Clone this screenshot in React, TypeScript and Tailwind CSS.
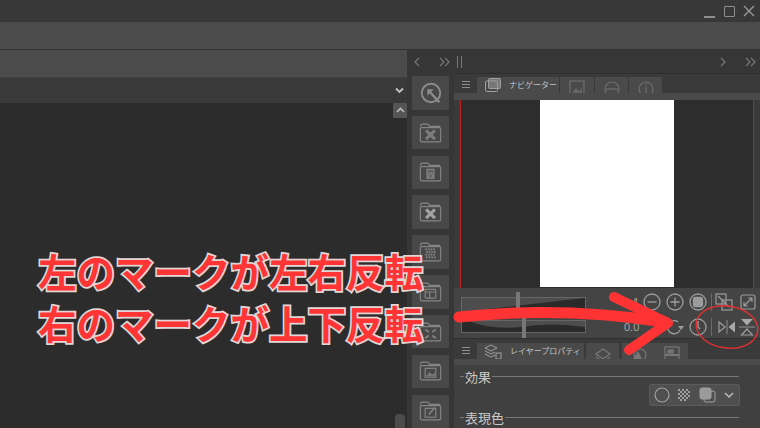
import type { ReactNode } from 'react'

const JP = 'font-["Noto_Sans_CJK_JP","Noto_Sans",sans-serif]'

function Folder({ children }: { children?: ReactNode }) {
  return (
    <div className="flex h-[35px] w-[37px] items-center justify-center bg-[#484848]">
      <svg width="23" height="22" viewBox="0 0 26 24" fill="none" stroke="#858585" strokeWidth="1.3">
        <path d="M2 5V3.5Q2 2 3.5 2H10L12 4.5H24" />
        <rect x="1.5" y="6" width="23" height="16" rx="1.5" />
        {children}
      </svg>
    </div>
  )
}

const toolIcons: ReactNode[] = [
  <path key="a" d="M8 9L18 19M18 9L8 19" strokeWidth="3.5" stroke="#7c7c7c" />,
  <g key="b">
    <rect x="9" y="9" width="8" height="10" fill="#5f5f5f" />
    <path d="M11 19V14Q13 12 15 14V19" />
  </g>,
  <path key="c" d="M8 9L18 19M18 9L8 19" strokeWidth="3.5" stroke="#a2a2a2" />,
  <g key="d" stroke="none" fill="#858585">
    {[7, 10, 13, 16].flatMap((x) =>
      [8, 11, 14, 17].map((y) => <rect key={`${x}-${y}`} x={x + (y % 2)} y={y} width="2" height="2" />),
    )}
  </g>,
  <g key="e">
    <rect x="7" y="9" width="12" height="10" rx="1" />
    <path d="M7 12H19M12 12V19" />
  </g>,
  <path key="f" d="M7 9L11 12M19 9L15 12M7 19L11 16M19 19L15 16" strokeWidth="2" />,
  <g key="g">
    <rect x="7" y="9" width="12" height="10" />
    <path d="M8 18L12 13L15 16L18 14V18Z" fill="#777" stroke="none" />
  </g>,
  <g key="h">
    <rect x="7" y="9" width="12" height="10" />
    <path d="M11 16L18 8" strokeWidth="1.6" />
  </g>,
]

function ToolStrip() {
  return (
    <div className="flex w-[47px] shrink-0 flex-col items-start gap-[6.3px] pl-[5px] pt-[3px]">
      <div className="flex h-[35px] w-[37px] items-center justify-center bg-[#484848]">
        <svg width="24" height="24" viewBox="0 0 26 26" fill="none" stroke="#8c8c8c" strokeWidth="2">
          <circle cx="13" cy="13" r="10" />
          <path d="M10 10L22 23" strokeWidth="2.5" />
          <path d="M9 16V9H16Z" fill="#8c8c8c" stroke="none" />
        </svg>
      </div>
      {toolIcons.map((icon, i) => (
        <Folder key={i}>{icon}</Folder>
      ))}
    </div>
  )
}

function Hamburger() {
  return (
    <div className="flex h-full w-[23px] flex-col items-center gap-[2px] pt-[4px]">
      <span className="h-px w-[8px] bg-[#8e8e8e]" />
      <span className="h-px w-[8px] bg-[#8e8e8e]" />
      <span className="h-px w-[8px] bg-[#8e8e8e]" />
    </div>
  )
}

function Tab({ icon, label, width }: { icon: ReactNode; label?: string; width: string }) {
  return (
    <div className={`flex h-full items-center overflow-hidden bg-[#4a4a4a] ${width} ${label ? 'gap-[8px] pl-[8px]' : 'justify-center pt-[4px]'}`}>
      {icon}
      {label && <span className={`${JP} whitespace-nowrap text-[8px] text-[#c4c4c4]`}>{label}</span>}
    </div>
  )
}

function Round({ children }: { children: ReactNode }) {
  return (
    <svg width="18" height="18" viewBox="0 0 18 18" fill="none" stroke="#9c9c9c" strokeWidth="1.3">
      <circle cx="9" cy="9" r="8" />
      {children}
    </svg>
  )
}

function SliderTrack({ down }: { down?: boolean }) {
  return down ? (
    <svg width="125" height="13" viewBox="0 0 125 13" className="block">
      <rect x="0.5" y="0.5" width="124" height="12" fill="#4d4d4d" stroke="#666" />
      <path d="M1 1H8Q30 10 60 7Q90 2 124 7V12H1Z" fill="#2a2a2a" />
    </svg>
  ) : (
    <svg width="125" height="20" viewBox="0 0 125 20" className="block">
      <rect x="0.5" y="0.5" width="124" height="19" fill="#4d4d4d" stroke="#666" />
      <path d="M1 15L124 1V19H1Z" fill="#2a2a2a" />
    </svg>
  )
}

function NavigatorControls() {
  return (
    <div className="flex h-[50px] items-start gap-[32px] bg-[#444] pl-[7px] pt-[5px]">
      <div className="relative mt-[4px] flex flex-col gap-[3px]">
        <SliderTrack />
        <SliderTrack down />
        <span className="absolute left-[55px] top-[-5px] h-[20px] w-[4px] bg-[#787878]" />
        <span className="absolute left-[61px] top-[21px] h-[20px] w-[4px] bg-[#787878]" />
      </div>
      <div className="flex flex-col gap-[7px]">
        <div className="flex items-center gap-[5px]">
          <span className="w-[20px] text-right text-[11px] text-[#aaa] [font-family:'Liberation_Sans',sans-serif]">1.4</span>
          <Round><path d="M4.5 9H13.5" /></Round>
          <Round><path d="M4.5 9H13.5M9 4.5V13.5" /></Round>
          <Round><rect x="4.5" y="4.5" width="9" height="9" rx="2" fill="#9c9c9c" /></Round>
          <span className="-ml-[1px] h-[18px] w-px bg-[#6a6a6a]" />
          <svg width="18" height="18" viewBox="0 0 18 18" fill="none" stroke="#9c9c9c" strokeWidth="1.2" className="-ml-[2px]">
            <rect x="1" y="1" width="10" height="10" />
            <rect x="7" y="7" width="10" height="10" />
            <path d="M3 3L14 14" />
          </svg>
          <svg width="16" height="16" viewBox="0 0 16 16" fill="none" stroke="#9c9c9c" strokeWidth="1.2" className="ml-[2px]">
            <rect x="1" y="1" width="14" height="14" rx="2" />
            <path d="M4 12L12 4M4 8V12H8M8 4H12V8" />
          </svg>
        </div>
        <div className="flex items-center gap-[5px]">
          <span className="w-[43px] pl-[6px] text-[11px] text-[#aaa] [font-family:'Liberation_Sans',sans-serif]">0.0</span>
          <svg width="18" height="18" viewBox="0 0 18 18" fill="none" stroke="#9c9c9c" strokeWidth="1.3">
            <path d="M14 12A6.5 6.5 0 1 1 12 4" />
            <path d="M12 8H18L15 12Z" fill="#9c9c9c" stroke="none" />
          </svg>
          <Round><path d="M9 3V9L11 11" /></Round>
          <span className="-ml-[1px] h-[18px] w-px bg-[#6a6a6a]" />
          <svg width="18" height="14" viewBox="0 0 18 14" fill="none" stroke="#9c9c9c" strokeWidth="1.2" className="ml-px">
            <path d="M1 2L7 7L1 12Z" />
            <path d="M17 1.5L10.5 7L17 12.5Z" fill="#a8a8a8" stroke="none" />
            <path d="M9 0V14" strokeWidth="0.8" />
          </svg>
          <svg width="16" height="18" viewBox="0 0 16 18" fill="none" stroke="#9c9c9c" strokeWidth="1.2" className="-ml-[2px]">
            <path d="M2 1H14L8 7.5Z" fill="#a8a8a8" stroke="none" />
            <path d="M0 9H16" strokeWidth="0.9" />
            <path d="M8 11L13.5 17H2.5Z" />
          </svg>
        </div>
      </div>
    </div>
  )
}

function LegendRow({ label }: { label: string }) {
  return (
    <div className="flex items-center gap-[1px]">
      <span className="h-px w-[4px] bg-[#777]" />
      <span className={`${JP} text-[13px] leading-[15px] text-[#c8c8c8]`}>{label}</span>
      <span className="h-px flex-1 bg-[#777]" />
    </div>
  )
}

export default function App() {
  return (
    <div className="relative flex h-[428px] w-[760px] flex-col overflow-hidden bg-[#2c2c2c]">
      {/* title bar */}
      <div className="flex h-[22px] items-center justify-end gap-[6px] bg-[#383838] pr-[5px]">
        <span className="mt-[11px] mr-[3px] h-[2px] w-[11px] bg-[#8e8e8e]" />
        <span className="h-[11px] w-[11px] rounded-[1px] border-[1.5px] border-[#8e8e8e]" />
        <svg width="12" height="12" viewBox="0 0 12 12" stroke="#999" strokeWidth="1.4" className="ml-[2px]">
          <path d="M1 1L11 11M11 1L1 11" />
        </svg>
      </div>
      {/* menu bar */}
      <div className="h-[28px] border-b border-[#333] bg-[#4b4b4b]" />

      <div className="flex min-h-0 flex-1">
        {/* canvas side */}
        <div className="flex w-[407px] shrink-0 flex-col">
          <div className="h-[28px] border-b border-[#414141] bg-[#4b4b4b]" />
          <div className="flex h-[25px] items-center justify-end bg-[#393939] pr-[3px]">
            <svg width="9" height="7" viewBox="0 0 9 7" fill="none" stroke="#c2c2c2" strokeWidth="1.8">
              <path d="M1 1.5L4.5 5L8 1.5" />
            </svg>
          </div>
          <div className="flex flex-1 flex-col items-end justify-between bg-[#2c2c2c]">
            <div className="flex h-[15px] w-[14px] items-center justify-center rounded-[1px] bg-[#555]">
              <svg width="9" height="7" viewBox="0 0 9 7" fill="none" stroke="#bbb" strokeWidth="1.6">
                <path d="M1 5L4.5 1.5L8 5" />
              </svg>
            </div>
            <div className="mr-[2px] h-[14px] w-[10px] rounded-t-[4px] bg-[#4b4b4b]" />
          </div>
        </div>

        {/* right dock */}
        <div className="flex min-w-0 flex-1 flex-col bg-[#363636]">
          <div className="flex h-[23px] items-center pl-[7px] text-[#777]">
            <svg width="6" height="10" viewBox="0 0 6 10" fill="none" stroke="currentColor" strokeWidth="1.2">
              <path d="M5 1L1 5L5 9" />
            </svg>
            <svg width="12" height="10" viewBox="0 0 12 10" fill="none" stroke="currentColor" strokeWidth="1.2" className="ml-[19px]">
              <path d="M1 1L5 5L1 9M6 1L10 5L6 9" />
            </svg>
            <span className="ml-[6px] h-[12px] w-[5px] border-x border-[#777]" />
            <svg width="6" height="10" viewBox="0 0 6 10" fill="none" stroke="currentColor" strokeWidth="1.2" className="ml-[258px]">
              <path d="M1 1L5 5L1 9" />
            </svg>
            <svg width="12" height="10" viewBox="0 0 12 10" fill="none" stroke="currentColor" strokeWidth="1.2" className="ml-[19px]">
              <path d="M1 1L5 5L1 9M6 1L10 5L6 9" />
            </svg>
          </div>

          <div className="flex min-h-0 flex-1">
            <ToolStrip />
            <div className="flex w-[306px] shrink-0 flex-col">
              {/* navigator panel */}
              <div className="flex h-[20px] items-end border-t border-[#2e2e2e] bg-[#3a3a3a] pt-[3px]">
                <Hamburger />
                <Tab
                  width="w-[82px]"
                  label="ナビゲーター"
                  icon={
                    <svg width="16" height="14" viewBox="0 0 16 14" fill="none" stroke="#a0a0a0" strokeWidth="1">
                      <rect x="3.5" y="0.5" width="12" height="10" rx="1" fill="#777" />
                      <rect x="0.5" y="3" width="12" height="10.5" rx="1" />
                    </svg>
                  }
                />
                <Tab
                  width="w-[34px] ml-px"
                  icon={
                    <svg width="16" height="14" viewBox="0 0 16 14" fill="none" stroke="#6e6e6e" strokeWidth="1.2">
                      <rect x="1" y="1" width="14" height="14" />
                      <path d="M3 13L7 8L10 11L13 8V13Z" fill="#666" stroke="none" />
                    </svg>
                  }
                />
                <Tab
                  width="w-[33px] ml-px"
                  icon={
                    <svg width="16" height="14" viewBox="0 0 16 14" fill="none" stroke="#6e6e6e" strokeWidth="1.2">
                      <circle cx="8" cy="9" r="7" />
                      <path d="M1 9H15" />
                    </svg>
                  }
                />
                <Tab
                  width="w-[33px] ml-px"
                  icon={
                    <svg width="16" height="14" viewBox="0 0 16 14" fill="none" stroke="#6e6e6e" strokeWidth="1.2">
                      <circle cx="8" cy="9" r="7" />
                      <path d="M8 7V15M8 3.5V5.5" />
                    </svg>
                  }
                />
              </div>
              <div className="h-[7px] bg-[#4a4a4a]" />
              <div className="flex h-[188px] bg-[#3a3a3a] px-[6px]">
                <span className="h-full w-px bg-[#c02020]" />
                <div className="flex h-full flex-1 justify-center bg-[#2d2d2d]">
                  <div className="h-[187px] w-[134px] bg-white" />
                </div>
                <span className="h-full w-px bg-[#c02020]" />
              </div>
              <NavigatorControls />

              {/* layer property panel */}
              <div className="flex h-[21px] items-end border-t border-[#2e2e2e] bg-[#3a3a3a] pt-[4px]">
                <Hamburger />
                <Tab
                  width="w-[107px]"
                  label="レイヤープロパティ"
                  icon={
                    <svg width="18" height="17" viewBox="0 0 18 17" fill="none" stroke="#a0a0a0" strokeWidth="1" className="-ml-px">
                      <path d="M1 5L7 2L13 5L7 8Z" />
                      <path d="M1 8L7 11L11 9M1 11L7 14L11 12" />
                      <rect x="12" y="10" width="5" height="6" />
                    </svg>
                  }
                />
                <Tab
                  width="w-[33px] ml-[2px]"
                  icon={
                    <svg width="16" height="14" viewBox="0 0 16 14" fill="none" stroke="#777" strokeWidth="1.2">
                      <path d="M1 8L8 3L15 8L8 13Z" />
                      <path d="M1 11L8 16L15 11" />
                    </svg>
                  }
                />
                <Tab
                  width="w-[33px] ml-[3px]"
                  icon={
                    <svg width="16" height="14" viewBox="0 0 16 14" fill="none" stroke="#777" strokeWidth="1.2">
                      <circle cx="9" cy="9" r="6" />
                      <path d="M2 13L7 5L11 13Z" fill="#777" stroke="none" />
                    </svg>
                  }
                />
                <Tab
                  width="w-[33px]"
                  icon={
                    <svg width="16" height="14" viewBox="0 0 16 14" fill="none" stroke="#777" strokeWidth="1.2">
                      <rect x="1" y="1" width="14" height="14" />
                      <rect x="4" y="4" width="5" height="3" fill="#777" />
                      <path d="M1 9H15" strokeWidth="2" />
                    </svg>
                  }
                />
              </div>
              <div className="h-[6px] bg-[#4a4a4a]" />
              <div className="flex flex-1 flex-col bg-[#404040] pl-[6px] pr-[21px] pt-[4px]">
                <LegendRow label="効果" />
                <div className="flex justify-end">
                  <div className="-mr-px flex h-[22px] w-[91px] items-center gap-[8px] rounded-[2px] border border-[#5a5a5a] bg-[#4f4f4f] pl-[4px]">
                    <svg width="16" height="16" viewBox="0 0 16 16" fill="none" stroke="#a0a0a0" strokeWidth="1.2">
                      <circle cx="8" cy="8" r="7" />
                    </svg>
                    <svg width="13" height="13" viewBox="0 0 13 13" fill="#a0a0a0">
                      <path d="M0 0h2v2H0zM4 0h2v2H4zM8 0h2v2H8zM2 2h2v2H2zM6 2h2v2H6zM10 2h2v2h-2zM0 4h2v2H0zM4 4h2v2H4zM8 4h2v2H8zM2 6h2v2H2zM6 6h2v2H6zM10 6h2v2h-2zM0 8h2v2H0zM4 8h2v2H4zM8 8h2v2H8zM2 10h2v2H2zM6 10h2v2h-2z" />
                    </svg>
                    <svg width="17" height="16" viewBox="0 0 17 16" fill="none" stroke="#a0a0a0" strokeWidth="1">
                      <rect x="5" y="4" width="11" height="11" rx="2" />
                      <rect x="1" y="1" width="11" height="11" rx="2" fill="#9a9a9a" />
                    </svg>
                    <svg width="10" height="7" viewBox="0 0 10 7" fill="none" stroke="#bbb" strokeWidth="1.5">
                      <path d="M1 1L5 5L9 1" />
                    </svg>
                  </div>
                </div>
                <div className="mt-[4px]">
                  <LegendRow label="表現色" />
                </div>
              </div>
            </div>
          </div>
        </div>
      </div>

      {/* annotation over the screenshot */}
      <div
        className={`${JP} absolute left-[38px] top-[244px] whitespace-nowrap text-[38.5px] font-bold leading-[52px] text-[#ff3434] [-webkit-text-stroke:3.5px_#e2d6d6] [paint-order:stroke_fill]`}
      >
        <div>左のマークが左右反転</div>
        <div>右のマークが上下反転</div>
      </div>
      <svg width="760" height="428" viewBox="0 0 760 428" fill="none" className="absolute left-0 top-0">
        <path d="M459 317Q560 306 665 322" stroke="#ff3333" strokeWidth="11" strokeLinecap="round" />
        <path d="M614 297L668 323L629 350" stroke="#ff3333" strokeWidth="10" strokeLinecap="round" strokeLinejoin="round" />
        <ellipse cx="727" cy="327" rx="31" ry="21" stroke="#e23030" strokeWidth="1.4" transform="rotate(8 727 327)" />
      </svg>
    </div>
  )
}
